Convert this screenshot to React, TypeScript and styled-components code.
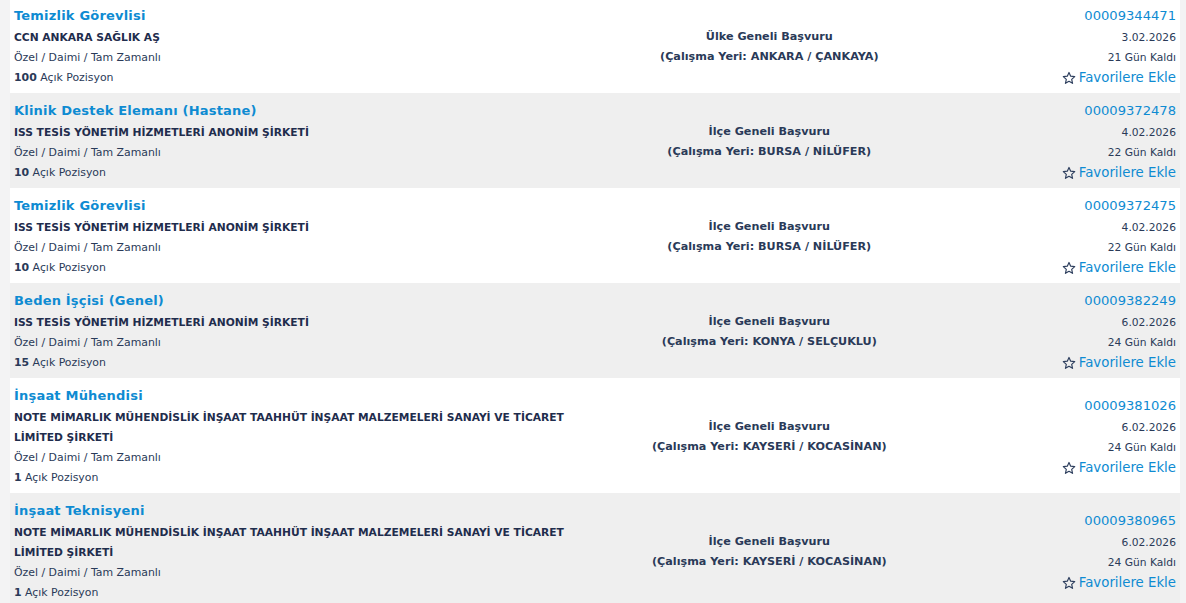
import React from "react";
import styled, { createGlobalStyle } from "styled-components";

const GlobalStyle = createGlobalStyle`
  html, body { margin: 0; padding: 0; }
  body {
    background: #f3f3f4;
    font-family: "DejaVu Sans", Verdana, sans-serif;
    color: #1f2d4d;
  }
`;

const Page = styled.div`
  padding: 0 6px 0 10px;
  margin-top: -2px;
`;

const List = styled.div`
  display: flex;
  flex-direction: column;
`;

const Row = styled.div<{ $alt: boolean }>`
  display: grid;
  grid-template-columns: 50% 30% 20%;
  background: ${(p) => (p.$alt ? "#efefef" : "#ffffff")};
  padding: 5px 4px;
  box-sizing: border-box;
`;

const Left = styled.div`
  display: flex;
  flex-direction: column;
  min-width: 0;
`;

const Title = styled.a`
  font-size: 13px;
  font-weight: bold;
  line-height: 25px;
  color: #0e8bd2;
  text-decoration: none;
  letter-spacing: 0.2px;
`;

const Company = styled.div`
  font-size: 10.7px;
  font-weight: bold;
  line-height: 20px;
  color: #1f2d4d;
`;

const Line = styled.div`
  font-size: 10.9px;
  line-height: 20px;
  color: #2a3a58;
`;

const Middle = styled.div`
  display: flex;
  flex-direction: column;
  justify-content: center;
  align-items: center;
  padding-top: 3px;
  text-align: center;
  font-size: 11.2px;
  font-weight: bold;
  line-height: 20px;
  color: #2a3a58;
`;

const Right = styled.div`
  display: flex;
  flex-direction: column;
  justify-content: center;
  align-items: flex-end;
  text-align: right;
`;

const Code = styled.div`
  font-size: 13.1px;
  line-height: 25px;
  color: #0e8bd2;
`;

const Meta = styled.div`
  font-size: 10.7px;
  line-height: 20px;
  color: #2a3a58;
`;

const Fav = styled.a`
  display: flex;
  align-items: center;
  gap: 3px;
  font-size: 13.3px;
  line-height: 20px;
  color: #0e8bd2;
  text-decoration: none;
  svg { display: block; }
`;

const StarIcon = () => (
  <svg width="14" height="14" viewBox="0 0 24 24" fill="none" stroke="#2e3f5e" strokeWidth="2" strokeLinejoin="round">
    <polygon points="12,2.5 14.9,8.9 21.8,9.6 16.6,14.3 18.1,21.2 12,17.6 5.9,21.2 7.4,14.3 2.2,9.6 9.1,8.9" />
  </svg>
);

type Job = {
  title: string;
  company: string;
  count: number;
  scope: string;
  place: string;
  code: string;
  date: string;
  days: number;
};

const jobs: Job[] = [
  { title: "Temizlik Görevlisi", company: "CCN ANKARA SAĞLIK AŞ", count: 100, scope: "Ülke Geneli Başvuru", place: "ANKARA / ÇANKAYA", code: "00009344471", date: "3.02.2026", days: 21 },
  { title: "Klinik Destek Elemanı (Hastane)", company: "ISS TESİS YÖNETİM HİZMETLERİ ANONİM ŞİRKETİ", count: 10, scope: "İlçe Geneli Başvuru", place: "BURSA / NİLÜFER", code: "00009372478", date: "4.02.2026", days: 22 },
  { title: "Temizlik Görevlisi", company: "ISS TESİS YÖNETİM HİZMETLERİ ANONİM ŞİRKETİ", count: 10, scope: "İlçe Geneli Başvuru", place: "BURSA / NİLÜFER", code: "00009372475", date: "4.02.2026", days: 22 },
  { title: "Beden İşçisi (Genel)", company: "ISS TESİS YÖNETİM HİZMETLERİ ANONİM ŞİRKETİ", count: 15, scope: "İlçe Geneli Başvuru", place: "KONYA / SELÇUKLU", code: "00009382249", date: "6.02.2026", days: 24 },
  { title: "İnşaat Mühendisi", company: "NOTE MİMARLIK MÜHENDİSLİK İNŞAAT TAAHHÜT İNŞAAT MALZEMELERİ SANAYİ VE TİCARET LİMİTED ŞİRKETİ", count: 1, scope: "İlçe Geneli Başvuru", place: "KAYSERİ / KOCASİNAN", code: "00009381026", date: "6.02.2026", days: 24 },
  { title: "İnşaat Teknisyeni", company: "NOTE MİMARLIK MÜHENDİSLİK İNŞAAT TAAHHÜT İNŞAAT MALZEMELERİ SANAYİ VE TİCARET LİMİTED ŞİRKETİ", count: 1, scope: "İlçe Geneli Başvuru", place: "KAYSERİ / KOCASİNAN", code: "00009380965", date: "6.02.2026", days: 24 },
];

export default function App() {
  return (
    <>
      <GlobalStyle />
      <Page>
        <List>
          {jobs.map((j, i) => (
            <Row key={j.code} $alt={i % 2 === 1}>
              <Left>
                <Title href="#">{j.title}</Title>
                <Company>{j.company}</Company>
                <Line>Özel / Daimi / Tam Zamanlı</Line>
                <Line>
                  <b>{j.count}</b> Açık Pozisyon
                </Line>
              </Left>
              <Middle>
                <div>{j.scope}</div>
                <div>(Çalışma Yeri: {j.place})</div>
              </Middle>
              <Right>
                <Code>{j.code}</Code>
                <Meta>{j.date}</Meta>
                <Meta>{j.days} Gün Kaldı</Meta>
                <Fav href="#">
                  <StarIcon />
                  Favorilere Ekle
                </Fav>
              </Right>
            </Row>
          ))}
        </List>
      </Page>
    </>
  );
}
